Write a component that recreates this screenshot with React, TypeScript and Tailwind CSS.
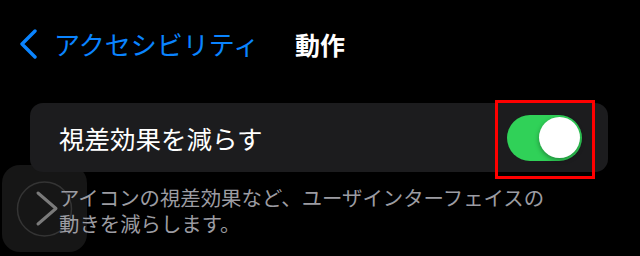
import React from 'react';

const jp = { fontFamily: '"Noto Sans CJK JP", "Noto Sans", sans-serif' };

export default function App() {
  return (
    <div className="relative w-[640px] h-[256px] overflow-hidden bg-black text-white" style={jp}>
      {/* Floating assistive button (sits under the page content) */}
      <div className="absolute left-[2px] top-[165px] w-[85px] h-[87px] rounded-[18px] bg-[#161616]">
        <svg width="85" height="87" viewBox="0 0 85 87" className="absolute inset-0">
          <circle cx="42.5" cy="44" r="27" fill="none" stroke="#343434" strokeWidth="1.5" />
          <path d="M36 28 L54 43.5 L36 59" fill="none" stroke="#7a7a7a" strokeWidth="3" strokeLinecap="round" strokeLinejoin="round" />
        </svg>
      </div>

      {/* Navigation bar */}
      <header className="relative grid grid-cols-[1fr_auto_1fr] items-center h-[88px]">
        <button className="flex items-center gap-[16px] pl-[19px] text-[#0a84ff]">
          <svg width="19" height="30" viewBox="0 0 19 30">
            <path d="M16 2 L3 15 L16 28" fill="none" stroke="currentColor" strokeWidth="3.4" strokeLinecap="round" strokeLinejoin="round" />
          </svg>
          <span className="text-[26px] leading-none whitespace-nowrap">アクセシビリティ</span>
        </button>
        <h1 className="text-[25px] font-bold leading-none">動作</h1>
        <div />
      </header>

      {/* Setting card */}
      <section className="relative ml-[30px] mr-[32px] mt-[15px] h-[69px] rounded-[13px] bg-[#1c1c1e] flex items-center justify-between pl-[29px] pr-[26px]">
        <span className="text-[25.5px] leading-none">視差効果を減らす</span>
        <div className="relative w-[75px] h-[46px] rounded-full bg-[#30d158]">
          <div className="absolute right-[2.5px] top-[2.5px] w-[41px] h-[41px] rounded-full bg-white shadow-[0_2px_5px_rgba(0,0,0,0.35)]" />
        </div>
        <div className="absolute right-[13px] -top-[3px] w-[100px] h-[79px] border-[3px] border-[#ff0000]" />
      </section>

      {/* Footer description */}
      <p className="relative ml-[59px] mt-[12px] text-[20.4px] leading-[26px] text-[#9c9ca2]">
        アイコンの視差効果など、ユーザインターフェイスの
        <br />
        動きを減らします。
      </p>
    </div>
  );
}
